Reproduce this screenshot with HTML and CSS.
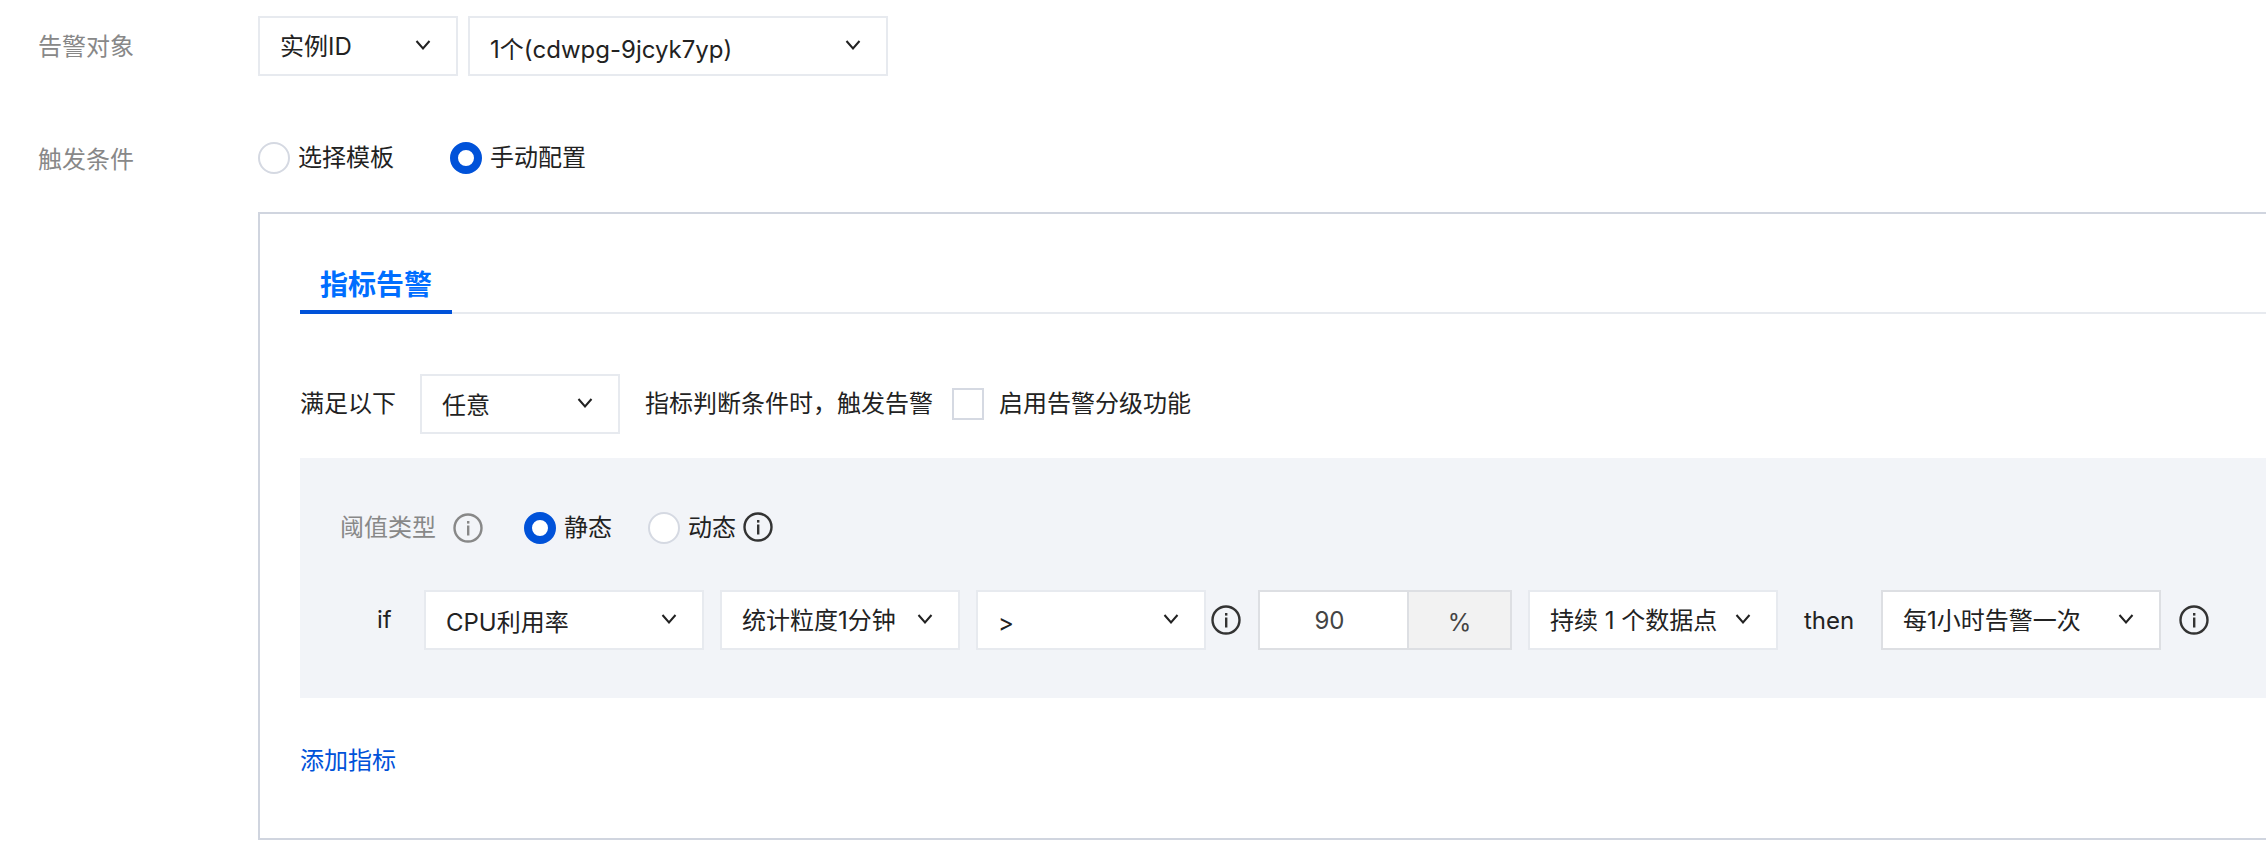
FILE: index.html
```html
<!DOCTYPE html>
<html lang="zh-CN">
<head>
<meta charset="utf-8">
<title>告警配置</title>
<link rel="stylesheet" href="styles.css">
</head>
<body>
<svg class="sprite" aria-hidden="true">
  <symbol id="chev" viewBox="0 0 16 10"><path d="M1.5 1 L8 8.5 L14.5 1" fill="none" stroke="currentColor" stroke-width="2"/></symbol>
  <symbol id="info" viewBox="0 0 30 30"><circle cx="15" cy="15" r="13.5" fill="none" stroke="currentColor" stroke-width="2.4"/><rect x="14" y="8" width="2.4" height="2.6" fill="currentColor"/><rect x="14" y="12.5" width="2.4" height="10" fill="currentColor"/></symbol>
</svg>
<main class="page">
  <div class="form-row form-row--target">
    <div class="form-label">告警对象</div>
    <div class="form-control">
      <div class="select select--type"><span class="select-text">实例ID</span><svg class="chev"><use href="#chev"/></svg></div>
      <div class="select select--instance"><span class="select-text text-lowest">1个(cdwpg-9jcyk7yp)</span><svg class="chev"><use href="#chev"/></svg></div>
    </div>
  </div>
  <div class="form-row form-row--trigger">
    <div class="form-label">触发条件</div>
    <div class="form-control radios">
      <label class="radio"><span class="radio-dot"></span><span>选择模板</span></label>
      <label class="radio"><span class="radio-dot radio-dot--on"></span><span>手动配置</span></label>
    </div>
  </div>
  <section class="config-box">
    <div class="tabs"><div class="tab">指标告警</div></div>
    <div class="rule-row">
      <span>满足以下</span>
      <div class="select select--any"><span class="select-text text-lower">任意</span><svg class="chev"><use href="#chev"/></svg></div>
      <span>指标判断条件时，触发告警</span>
      <span class="checkbox"></span>
      <span class="check-label">启用告警分级功能</span>
    </div>
    <div class="panel">
      <div class="threshold-row">
        <span class="threshold-label">阈值类型</span>
        <svg class="info info--muted"><use href="#info"/></svg>
        <label class="radio radio--static"><span class="radio-dot radio-dot--on"></span><span>静态</span></label>
        <label class="radio radio--dynamic"><span class="radio-dot"></span><span>动态</span></label>
        <svg class="info info--tight"><use href="#info"/></svg>
      </div>
      <div class="if-row">
        <span class="if-label">if</span>
        <div class="select select--metric"><span class="select-text text-low">CPU利用率</span><svg class="chev"><use href="#chev"/></svg></div>
        <div class="select select--period"><span class="select-text">统计粒度1分钟</span><svg class="chev"><use href="#chev"/></svg></div>
        <div class="select select--op"><span class="select-text text-low">&gt;</span><svg class="chev"><use href="#chev"/></svg></div>
        <svg class="info info--op"><use href="#info"/></svg>
        <div class="input-group"><span class="input-value">90</span><span class="input-unit">%</span></div>
        <div class="select select--duration"><span class="select-text">持续 1 个数据点</span><svg class="chev"><use href="#chev"/></svg></div>
        <span class="then-label">then</span>
        <div class="select select--repeat"><span class="select-text">每1小时告警一次</span><svg class="chev"><use href="#chev"/></svg></div>
        <svg class="info info--end"><use href="#info"/></svg>
      </div>
    </div>
    <a class="add-link">添加指标</a>
  </section>
</main>
</body>
</html>
```
FILE: styles.css
```css
* { box-sizing: border-box; }
html, body { margin: 0; padding: 0; background: #fff; }
body {
  width: 2266px;
  height: 858px;
  overflow: hidden;
  font-family: Inter, "Noto Sans CJK SC", sans-serif;
  font-size: 24px;
  line-height: 32px;
  color: #222;
}
.sprite { width: 0; height: 0; position: absolute; }
.page { padding-top: 16px; }

.form-row { display: flex; }
.form-row--trigger { margin-top: 66px; height: 32px; }
.form-row--target { align-items: center; height: 60px; }
.form-label { width: 258px; padding: 2px 0 0 38px; color: #888; flex: none; }
.form-control { display: flex; gap: 10px; }

.select {
  flex: none;
  display: flex;
  align-items: center;
  justify-content: space-between;
  height: 60px;
  padding: 0 25px 0 20px;
  background: #fff;
  border: 2px solid #e7eaef;
}
.select-text { white-space: nowrap; padding-top: 2px; }
.text-lower { padding-top: 4px; }
.text-low { padding-top: 6px; }
.text-lowest { padding-top: 8px; }
.chev { width: 16px; height: 10px; color: #222; flex: none; margin-top: -2px; }

.select--type { width: 200px; }
.select--instance { width: 420px; }
.select--any { width: 200px; margin: 0 25px 0 24px; }
.select--metric { width: 280px; }
.select--period { width: 240px; margin-left: 16px; }
.select--op { width: 230px; margin-left: 16px; }
.select--duration { width: 250px; margin-left: 16px; }
.select--repeat { width: 280px; border-color: #dddfe3; }

.radios { gap: 0; }
.radio { display: flex; align-items: center; gap: 8px; }
.radios .radio { width: 192px; }
.radio-dot {
  width: 32px;
  height: 32px;
  flex: none;
  border-radius: 50%;
  background: #fff;
  border: 2px solid #d5d9e2;
}
.radio-dot--on { border: 8px solid #0052d9; }

.config-box {
  width: 2100px;
  height: 628px;
  margin: 38px 0 0 258px;
  padding: 0 40px;
  border: 2px solid #d0d5df;
}
.tabs { height: 100px; display: flex; align-items: flex-end; border-bottom: 2px solid #e7eaef; }
.tab {
  width: 152px;
  height: 54px;
  margin-bottom: -2px;
  padding: 7px 0 0 20px;
  border-bottom: 4px solid #0052d9;
  font-size: 28px;
  line-height: 36px;
  font-weight: 700;
  color: #006eff;
}
.rule-row { display: flex; align-items: center; height: 60px; margin-top: 60px; }
.checkbox { width: 32px; height: 32px; margin: 0 15px 0 19px; border: 2px solid #d5d9e2; background: #fff; }

.panel { margin-top: 24px; height: 240px; padding: 54px 0 0 40px; background: #f2f4f8; }
.threshold-row { display: flex; align-items: center; height: 32px; }
.threshold-label { width: 113px; color: #888; }
.info { width: 30px; height: 30px; flex: none; color: #333; }
.info--muted { color: #888; }
.info--tight { margin: -2px 0 0 7px; }
.radio--static { margin-left: 41px; }
.radio--dynamic { margin-left: 36px; }

.if-row { display: flex; align-items: center; height: 60px; margin-top: 46px; }
.if-label { width: 84px; padding-left: 37px; }
.info--op { margin-left: 5px; }
.input-group {
  display: flex;
  width: 254px;
  height: 60px;
  margin-left: 17px;
  flex: none;
  border: 2px solid #dddfe3;
  color: #444;
  text-align: center;
}
.input-value { width: 147px; background: #fff; line-height: 58px; padding-right: 8px; }
.input-unit { flex: 1; background: #f2f2f2; border-left: 2px solid #dddfe3; line-height: 62px; }
.then-label { width: 103px; padding-left: 26px; padding-top: 2px; }
.info--end { margin-left: 18px; }

.add-link { display: block; margin-top: 47px; color: #0052d9; }
```
